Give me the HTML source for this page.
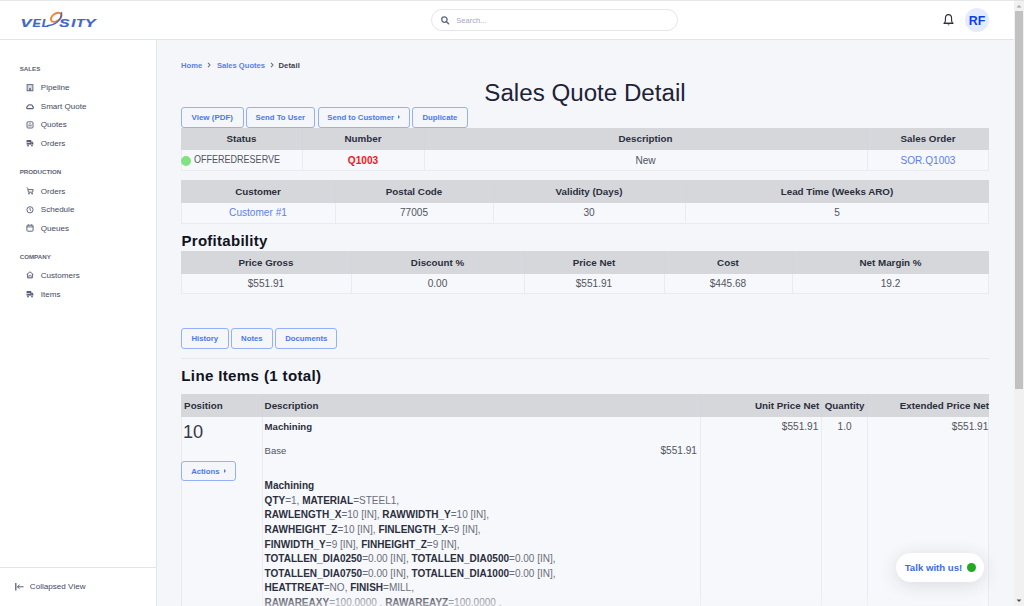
<!DOCTYPE html>
<html><head><meta charset="utf-8"><title>Sales Quote Detail</title>
<style>
html,body{margin:0;padding:0;}
body{width:1024px;height:606px;overflow:hidden;position:relative;background:#f5f6fa;font-family:"Liberation Sans",sans-serif;}
.t{position:absolute;white-space:nowrap;}
.r{position:absolute;}
b{font-weight:700}
</style></head><body>
<div class="r" style="left:0px;top:0px;width:1024px;height:1px;background:#e6e7ea"></div>
<div class="r" style="left:0px;top:1px;width:1024px;height:38px;background:#fff"></div>
<div class="r" style="left:0px;top:39px;width:1024px;height:1px;background:#e3e5ec"></div>
<div class="r" style="left:0px;top:40px;width:156px;height:566px;background:#fff"></div>
<div class="r" style="left:156px;top:40px;width:1px;height:566px;background:#e3e5ec"></div>
<div class="r" style="left:0px;top:567px;width:156px;height:1px;background:#e3e5ec"></div>
<svg class="r" style="left:0px;top:0px" width="110" height="36" viewBox="0 0 110 36"><text x="20.50" y="26.7" font-family="Liberation Sans" font-weight="700" font-style="italic" font-size="10.1" fill="#4366c6" stroke="#4366c6" stroke-width="0.2" textLength="11.00" lengthAdjust="spacingAndGlyphs">V</text><text x="32.50" y="26.7" font-family="Liberation Sans" font-weight="700" font-style="italic" font-size="10.1" fill="#4366c6" stroke="#4366c6" stroke-width="0.2" textLength="8.20" lengthAdjust="spacingAndGlyphs">E</text><text x="41.80" y="26.7" font-family="Liberation Sans" font-weight="700" font-style="italic" font-size="10.1" fill="#4366c6" stroke="#4366c6" stroke-width="0.2" textLength="7.40" lengthAdjust="spacingAndGlyphs">L</text><text x="59.30" y="26.7" font-family="Liberation Sans" font-weight="700" font-style="italic" font-size="10.1" fill="#4366c6" stroke="#4366c6" stroke-width="0.2" textLength="10.20" lengthAdjust="spacingAndGlyphs">S</text><text x="71.20" y="26.7" font-family="Liberation Sans" font-weight="700" font-style="italic" font-size="10.1" fill="#4366c6" stroke="#4366c6" stroke-width="0.2" textLength="4.10" lengthAdjust="spacingAndGlyphs">I</text><text x="76.10" y="26.7" font-family="Liberation Sans" font-weight="700" font-style="italic" font-size="10.1" fill="#4366c6" stroke="#4366c6" stroke-width="0.2" textLength="8.60" lengthAdjust="spacingAndGlyphs">T</text><text x="84.70" y="26.7" font-family="Liberation Sans" font-weight="700" font-style="italic" font-size="10.1" fill="#4366c6" stroke="#4366c6" stroke-width="0.2" textLength="10.90" lengthAdjust="spacingAndGlyphs">Y</text><ellipse cx="56.2" cy="17.3" rx="6.0" ry="3.7" fill="none" stroke="#f2832f" stroke-width="1.9" transform="rotate(-35 56.2 17.3)"/><path d="M47.5 25.6 C 54 25.4, 61.5 21, 61.6 12.8" fill="none" stroke="#4366c6" stroke-width="1.4" stroke-linecap="round"/></svg>
<div class="r" style="left:431px;top:9px;width:247px;height:22px;box-sizing:border-box;border:1px solid #e4e6ee;border-radius:11px;background:#fff"></div>
<svg class="r" style="left:440px;top:15px" width="11" height="11" viewBox="0 0 11 11"><circle cx="4.4" cy="4.6" r="2.7" fill="none" stroke="#5c6684" stroke-width="1.3"/><path d="M6.5 6.7 L8.6 8.8" stroke="#5c6684" stroke-width="1.4" stroke-linecap="round"/></svg>
<div class="t" style="left:456.30px;top:15.90px;font-size:7.5px;line-height:9.00px;font-weight:400;color:#a3a6c4;">Search...</div>
<svg class="r" style="left:942px;top:13px" width="13" height="14" viewBox="0 0 13 14"><path d="M2.2 10.2 L2.9 9.2 C3.3 8.5 3.4 7.9 3.4 6.9 V5.6 C3.4 3.3 4.7 1.6 6.5 1.6 C8.3 1.6 9.6 3.3 9.6 5.6 V6.9 C9.6 7.9 9.7 8.5 10.1 9.2 L10.8 10.2 Z" fill="none" stroke="#272b36" stroke-width="1.1" stroke-linejoin="round"/><path d="M1.6 10.3 H11.4" stroke="#272b36" stroke-width="1.1"/><path d="M5.4 11.6 L6.5 12.6 L7.6 11.6 Z" fill="#272b36"/></svg>
<div class="r" style="left:965px;top:8px;width:24px;height:24px;border-radius:50%;background:#e3ebfd"></div>
<div class="t" style="left:965.00px;top:14.26px;font-size:12.4px;line-height:14.88px;font-weight:700;color:#0b3ff0;width:24.00px;text-align:center;">RF</div>
<div class="t" style="left:19.70px;top:64.83px;font-size:6.2px;line-height:7.44px;font-weight:700;color:#5d6375;">SALES</div>
<div class="t" style="left:40.80px;top:83.27px;font-size:8.06px;line-height:9.67px;font-weight:400;color:#434a62;">Pipeline</div>
<svg class="r" style="left:25.5px;top:84px" width="8" height="8" viewBox="0 0 8 8"><rect x="1.1" y="0.6" width="5.8" height="6.2" fill="#d5d8e0" stroke="#5a6079" stroke-width="0.9"/><rect x="3.2" y="4.2" width="1.6" height="2.6" fill="#5a6079"/></svg>
<div class="t" style="left:40.80px;top:101.87px;font-size:8.06px;line-height:9.67px;font-weight:400;color:#434a62;">Smart Quote</div>
<svg class="r" style="left:25.5px;top:102px" width="8" height="8" viewBox="0 0 8 8"><path d="M1.4 6.6 C0.4 6.6 0.3 4.8 1.5 4.6 C1.7 3.2 3.2 2.4 4.3 3 C5.1 2.4 6.6 3 6.5 4.4 C7.7 4.6 7.6 6.6 6.5 6.6 Z" fill="none" stroke="#5a6079" stroke-width="1.1" stroke-linejoin="round"/></svg>
<div class="t" style="left:40.80px;top:120.47px;font-size:8.06px;line-height:9.67px;font-weight:400;color:#434a62;">Quotes</div>
<svg class="r" style="left:25.5px;top:121px" width="8" height="8" viewBox="0 0 8 8"><rect x="1" y="0.8" width="6" height="6.2" rx="1" fill="none" stroke="#5a6079" stroke-width="0.95"/><path d="M2.2 4.8 H5.8 M3 3.6 L4 2.4 L5 3.6" fill="none" stroke="#5a6079" stroke-width="0.9"/></svg>
<div class="t" style="left:40.80px;top:139.07px;font-size:8.06px;line-height:9.67px;font-weight:400;color:#434a62;">Orders</div>
<svg class="r" style="left:25.5px;top:139px" width="8" height="8" viewBox="0 0 8 8"><rect x="0.6" y="1" width="4.6" height="4.6" fill="#5a6079"/><path d="M5.2 2.4 H6.4 L7.4 4 V5.6 H5.2 Z" fill="#5a6079"/><rect x="0.6" y="3" width="3.6" height="0.7" fill="#fff"/><circle cx="2" cy="6.6" r="0.9" fill="#5a6079"/><circle cx="6" cy="6.6" r="0.9" fill="#5a6079"/></svg>
<div class="t" style="left:19.70px;top:168.33px;font-size:6.2px;line-height:7.44px;font-weight:700;color:#5d6375;">PRODUCTION</div>
<div class="t" style="left:40.80px;top:186.67px;font-size:8.06px;line-height:9.67px;font-weight:400;color:#434a62;">Orders</div>
<svg class="r" style="left:25.5px;top:187px" width="8" height="8" viewBox="0 0 8 8"><path d="M0.6 0.4 L1.8 1.4 L2.4 5.2 H6.6 L7.2 2.6 H2.2" fill="none" stroke="#5a6079" stroke-width="0.95"/><circle cx="3" cy="6.6" r="0.85" fill="#5a6079"/><circle cx="6.1" cy="6.6" r="0.85" fill="#5a6079"/></svg>
<div class="t" style="left:40.80px;top:205.37px;font-size:8.06px;line-height:9.67px;font-weight:400;color:#434a62;">Schedule</div>
<svg class="r" style="left:25.5px;top:206px" width="8" height="8" viewBox="0 0 8 8"><circle cx="4" cy="3.8" r="3.1" fill="none" stroke="#5a6079" stroke-width="0.95"/><path d="M4 2 V3.9 L5.2 4.8" fill="none" stroke="#5a6079" stroke-width="0.9"/></svg>
<div class="t" style="left:40.80px;top:223.97px;font-size:8.06px;line-height:9.67px;font-weight:400;color:#434a62;">Queues</div>
<svg class="r" style="left:25.5px;top:224px" width="8" height="8" viewBox="0 0 8 8"><rect x="0.9" y="1.2" width="6.2" height="6" rx="0.8" fill="none" stroke="#5a6079" stroke-width="0.95"/><path d="M0.9 2.9 H7.1" stroke="#5a6079" stroke-width="0.9"/><path d="M2.4 0.3 V1.6 M5.6 0.3 V1.6" stroke="#5a6079" stroke-width="0.8"/></svg>
<div class="t" style="left:19.70px;top:253.33px;font-size:6.2px;line-height:7.44px;font-weight:700;color:#5d6375;">COMPANY</div>
<div class="t" style="left:40.80px;top:271.17px;font-size:8.06px;line-height:9.67px;font-weight:400;color:#434a62;">Customers</div>
<svg class="r" style="left:25.5px;top:271px" width="8" height="8" viewBox="0 0 8 8"><path d="M0.7 3.6 L4 0.8 L7.3 3.6 M1.6 3 V6.9 H6.4 V3" fill="none" stroke="#5a6079" stroke-width="0.95" stroke-linejoin="round"/><path d="M2.8 6.9 V5 C2.8 4 5.2 4 5.2 5 V6.9" fill="none" stroke="#5a6079" stroke-width="0.8"/></svg>
<div class="t" style="left:40.80px;top:289.77px;font-size:8.06px;line-height:9.67px;font-weight:400;color:#434a62;">Items</div>
<svg class="r" style="left:25.5px;top:290px" width="8" height="8" viewBox="0 0 8 8"><rect x="0.6" y="1" width="4.6" height="4.6" fill="#5a6079"/><path d="M5.2 2.4 H6.4 L7.4 4 V5.6 H5.2 Z" fill="#5a6079"/><rect x="0.6" y="3" width="3.6" height="0.7" fill="#fff"/><circle cx="2" cy="6.6" r="0.9" fill="#5a6079"/><circle cx="6" cy="6.6" r="0.9" fill="#5a6079"/></svg>
<svg class="r" style="left:14px;top:582px" width="11" height="10" viewBox="0 0 11 10"><path d="M1.8 1 V8.6" stroke="#5a6079" stroke-width="1.3"/><path d="M3.4 4.8 H9.6 M5.6 2.8 L3.4 4.8 L5.6 6.8" fill="none" stroke="#5a6079" stroke-width="1"/></svg>
<div class="t" style="left:29.80px;top:581.81px;font-size:8.12px;line-height:9.74px;font-weight:400;color:#434a62;">Collapsed View</div>
<div class="t" style="left:181.10px;top:60.51px;font-size:7.6px;line-height:9.12px;font-weight:700;color:#5a80f0;">Home</div>
<svg class="r" style="left:206px;top:61px" width="6" height="8" viewBox="0 0 6 8"><path d="M2 1.8 L4 4 L2 6.2" fill="none" stroke="#6b7080" stroke-width="1.1"/></svg>
<div class="t" style="left:216.90px;top:60.51px;font-size:7.6px;line-height:9.12px;font-weight:700;color:#5a80f0;">Sales Quotes</div>
<svg class="r" style="left:269px;top:61px" width="6" height="8" viewBox="0 0 6 8"><path d="M2 1.8 L4 4 L2 6.2" fill="none" stroke="#6b7080" stroke-width="1.1"/></svg>
<div class="t" style="left:278.50px;top:60.51px;font-size:7.6px;line-height:9.12px;font-weight:700;color:#3a3e4c;letter-spacing:0.12px;">Detail</div>
<div class="t" style="left:181.00px;top:78.74px;font-size:24.15px;line-height:28.98px;font-weight:400;color:#1e2236;width:808.00px;text-align:center;">Sales Quote Detail</div>
<div class="r" style="left:181px;top:107px;width:62.5px;height:20.5px;box-sizing:border-box;border:1px solid #94b0f6;border-radius:3px;background:#f5f6fa"></div>
<div class="t" style="left:181.00px;top:112.66px;font-size:7.97px;line-height:9.56px;font-weight:700;color:#4a78f0;width:62.50px;text-align:center;">View (PDF)</div>
<div class="r" style="left:245.6px;top:107px;width:69.4px;height:20.5px;box-sizing:border-box;border:1px solid #94b0f6;border-radius:3px;background:#f5f6fa"></div>
<div class="t" style="left:245.60px;top:112.86px;font-size:7.75px;line-height:9.30px;font-weight:700;color:#4a78f0;width:69.40px;text-align:center;">Send To User</div>
<div class="r" style="left:317.5px;top:107px;width:92.19999999999999px;height:20.5px;box-sizing:border-box;border:1px solid #94b0f6;border-radius:3px;background:#f5f6fa"></div>
<div class="t" style="left:317.50px;top:112.86px;font-size:7.75px;line-height:9.30px;font-weight:700;color:#4a78f0;width:92.20px;text-align:center;">Send to Customer<span style="display:inline-block;width:0;height:0;border-left:2.6px solid currentColor;border-top:2.4px solid transparent;border-bottom:2.4px solid transparent;margin-left:4px;vertical-align:1px"></span></div>
<div class="r" style="left:412px;top:107px;width:55.80000000000001px;height:20.5px;box-sizing:border-box;border:1px solid #94b0f6;border-radius:3px;background:#f5f6fa"></div>
<div class="t" style="left:412.00px;top:112.86px;font-size:7.75px;line-height:9.30px;font-weight:700;color:#4a78f0;width:55.80px;text-align:center;">Duplicate</div>
<div class="r" style="left:181px;top:128px;width:808px;height:22px;background:#d6d7db"></div>
<div class="r" style="left:181px;top:150px;width:808px;height:21px;box-sizing:border-box;background:#f7f8fb;border:1px solid #eaebf0;border-top:0"></div>
<div class="r" style="left:302px;top:128px;width:1px;height:22px;background:#d3d5dc"></div>
<div class="r" style="left:302px;top:150px;width:1px;height:21px;background:#eaebf0"></div>
<div class="r" style="left:424px;top:128px;width:1px;height:22px;background:#d3d5dc"></div>
<div class="r" style="left:424px;top:150px;width:1px;height:21px;background:#eaebf0"></div>
<div class="r" style="left:867px;top:128px;width:1px;height:22px;background:#d3d5dc"></div>
<div class="r" style="left:867px;top:150px;width:1px;height:21px;background:#eaebf0"></div>
<div class="t" style="left:181.00px;top:133.12px;font-size:9.8px;line-height:11.76px;font-weight:700;color:#2b2f3d;width:121.00px;text-align:center;">Status</div>
<div class="t" style="left:302.00px;top:133.12px;font-size:9.8px;line-height:11.76px;font-weight:700;color:#2b2f3d;width:122.00px;text-align:center;">Number</div>
<div class="t" style="left:424.00px;top:133.12px;font-size:9.8px;line-height:11.76px;font-weight:700;color:#2b2f3d;width:443.00px;text-align:center;">Description</div>
<div class="t" style="left:867.00px;top:133.12px;font-size:9.8px;line-height:11.76px;font-weight:700;color:#2b2f3d;width:122.00px;text-align:center;">Sales Order</div>
<div class="t" style="left:302.00px;top:154.74px;font-size:10.1px;line-height:12.12px;font-weight:700;color:#f5141a;width:122.00px;text-align:center;">Q1003</div>
<div class="t" style="left:424.00px;top:154.74px;font-size:10.1px;line-height:12.12px;font-weight:400;color:#51555f;width:443.00px;text-align:center;">New</div>
<div class="t" style="left:867.00px;top:154.74px;font-size:10.1px;line-height:12.12px;font-weight:400;color:#5a80f0;width:122.00px;text-align:center;">SOR.Q1003</div>
<div class="r" style="left:181px;top:155.5px;width:10px;height:10px;border-radius:50%;background:#82e282"></div>
<div class="t" style="left:194.10px;top:153.95px;font-size:10.2px;line-height:12.24px;font-weight:400;color:#51555f;transform:scaleX(0.885);transform-origin:0 0;">OFFEREDRESERVE</div>
<div class="r" style="left:181px;top:180px;width:808px;height:23px;background:#d6d7db"></div>
<div class="r" style="left:181px;top:203px;width:808px;height:21px;box-sizing:border-box;background:#f7f8fb;border:1px solid #eaebf0;border-top:0"></div>
<div class="r" style="left:335px;top:180px;width:1px;height:23px;background:#d3d5dc"></div>
<div class="r" style="left:335px;top:203px;width:1px;height:21px;background:#eaebf0"></div>
<div class="r" style="left:493px;top:180px;width:1px;height:23px;background:#d3d5dc"></div>
<div class="r" style="left:493px;top:203px;width:1px;height:21px;background:#eaebf0"></div>
<div class="r" style="left:685px;top:180px;width:1px;height:23px;background:#d3d5dc"></div>
<div class="r" style="left:685px;top:203px;width:1px;height:21px;background:#eaebf0"></div>
<div class="t" style="left:181.00px;top:185.92px;font-size:9.8px;line-height:11.76px;font-weight:700;color:#2b2f3d;width:154.00px;text-align:center;">Customer</div>
<div class="t" style="left:335.00px;top:185.92px;font-size:9.8px;line-height:11.76px;font-weight:700;color:#2b2f3d;width:158.00px;text-align:center;">Postal Code</div>
<div class="t" style="left:493.00px;top:185.92px;font-size:9.8px;line-height:11.76px;font-weight:700;color:#2b2f3d;width:192.00px;text-align:center;">Validity (Days)</div>
<div class="t" style="left:685.00px;top:185.92px;font-size:9.8px;line-height:11.76px;font-weight:700;color:#2b2f3d;width:304.00px;text-align:center;">Lead Time (Weeks ARO)</div>
<div class="t" style="left:181.00px;top:207.14px;font-size:10.1px;line-height:12.12px;font-weight:400;color:#5a80f0;width:154.00px;text-align:center;">Customer #1</div>
<div class="t" style="left:335.00px;top:207.14px;font-size:10.1px;line-height:12.12px;font-weight:400;color:#51555f;width:158.00px;text-align:center;">77005</div>
<div class="t" style="left:493.00px;top:207.14px;font-size:10.1px;line-height:12.12px;font-weight:400;color:#51555f;width:192.00px;text-align:center;">30</div>
<div class="t" style="left:685.00px;top:207.14px;font-size:10.1px;line-height:12.12px;font-weight:400;color:#51555f;width:304.00px;text-align:center;">5</div>
<div class="t" style="left:181.50px;top:232.20px;font-size:15.0px;line-height:18.00px;font-weight:700;color:#101322;letter-spacing:0.28px;">Profitability</div>
<div class="r" style="left:181px;top:251px;width:808px;height:23px;background:#d6d7db"></div>
<div class="r" style="left:181px;top:274px;width:808px;height:20px;box-sizing:border-box;background:#f7f8fb;border:1px solid #eaebf0;border-top:0"></div>
<div class="r" style="left:351px;top:251px;width:1px;height:23px;background:#d3d5dc"></div>
<div class="r" style="left:351px;top:274px;width:1px;height:20px;background:#eaebf0"></div>
<div class="r" style="left:524px;top:251px;width:1px;height:23px;background:#d3d5dc"></div>
<div class="r" style="left:524px;top:274px;width:1px;height:20px;background:#eaebf0"></div>
<div class="r" style="left:664px;top:251px;width:1px;height:23px;background:#d3d5dc"></div>
<div class="r" style="left:664px;top:274px;width:1px;height:20px;background:#eaebf0"></div>
<div class="r" style="left:792px;top:251px;width:1px;height:23px;background:#d3d5dc"></div>
<div class="r" style="left:792px;top:274px;width:1px;height:20px;background:#eaebf0"></div>
<div class="t" style="left:181.00px;top:256.72px;font-size:9.8px;line-height:11.76px;font-weight:700;color:#2b2f3d;width:170.00px;text-align:center;">Price Gross</div>
<div class="t" style="left:351.00px;top:256.72px;font-size:9.8px;line-height:11.76px;font-weight:700;color:#2b2f3d;width:173.00px;text-align:center;">Discount %</div>
<div class="t" style="left:524.00px;top:256.72px;font-size:9.8px;line-height:11.76px;font-weight:700;color:#2b2f3d;width:140.00px;text-align:center;">Price Net</div>
<div class="t" style="left:664.00px;top:256.72px;font-size:9.8px;line-height:11.76px;font-weight:700;color:#2b2f3d;width:128.00px;text-align:center;">Cost</div>
<div class="t" style="left:792.00px;top:256.72px;font-size:9.8px;line-height:11.76px;font-weight:700;color:#2b2f3d;width:197.00px;text-align:center;">Net Margin %</div>
<div class="t" style="left:181.00px;top:278.04px;font-size:10.1px;line-height:12.12px;font-weight:400;color:#51555f;width:170.00px;text-align:center;">$551.91</div>
<div class="t" style="left:351.00px;top:278.04px;font-size:10.1px;line-height:12.12px;font-weight:400;color:#51555f;width:173.00px;text-align:center;">0.00</div>
<div class="t" style="left:524.00px;top:278.04px;font-size:10.1px;line-height:12.12px;font-weight:400;color:#51555f;width:140.00px;text-align:center;">$551.91</div>
<div class="t" style="left:664.00px;top:278.04px;font-size:10.1px;line-height:12.12px;font-weight:400;color:#51555f;width:128.00px;text-align:center;">$445.68</div>
<div class="t" style="left:792.00px;top:278.04px;font-size:10.1px;line-height:12.12px;font-weight:400;color:#51555f;width:197.00px;text-align:center;">19.2</div>
<div class="r" style="left:181px;top:328.3px;width:47.5px;height:20.30000000000001px;box-sizing:border-box;border:1px solid #94b0f6;border-radius:3px;background:#f5f6fa"></div>
<div class="t" style="left:181.00px;top:333.86px;font-size:7.75px;line-height:9.30px;font-weight:700;color:#4a78f0;width:47.50px;text-align:center;">History</div>
<div class="r" style="left:231.1px;top:328.3px;width:41.50000000000003px;height:20.30000000000001px;box-sizing:border-box;border:1px solid #94b0f6;border-radius:3px;background:#f5f6fa"></div>
<div class="t" style="left:231.10px;top:333.86px;font-size:7.75px;line-height:9.30px;font-weight:700;color:#4a78f0;width:41.50px;text-align:center;">Notes</div>
<div class="r" style="left:275.1px;top:328.3px;width:62.299999999999955px;height:20.30000000000001px;box-sizing:border-box;border:1px solid #94b0f6;border-radius:3px;background:#f5f6fa"></div>
<div class="t" style="left:275.10px;top:333.86px;font-size:7.75px;line-height:9.30px;font-weight:700;color:#4a78f0;width:62.30px;text-align:center;">Documents</div>
<div class="r" style="left:181px;top:358px;width:808px;height:1px;background:#e7e8ed"></div>
<div class="t" style="left:181.30px;top:366.71px;font-size:15.1px;line-height:18.12px;font-weight:700;color:#101322;letter-spacing:0.34px;">Line Items (1 total)</div>
<div class="r" style="left:181px;top:394px;width:808px;height:23px;background:#d6d7db"></div>
<div class="r" style="left:181px;top:417px;width:808px;height:190px;background:#f7f8fb"></div>
<div class="r" style="left:181px;top:417px;width:1px;height:190px;background:#eaebf0"></div>
<div class="r" style="left:988px;top:417px;width:1px;height:190px;background:#eaebf0"></div>
<div class="r" style="left:262px;top:394px;width:1px;height:23px;background:#d3d5dc"></div>
<div class="r" style="left:262px;top:417px;width:1px;height:190px;background:#eaebf0"></div>
<div class="r" style="left:700px;top:394px;width:1px;height:23px;background:#d3d5dc"></div>
<div class="r" style="left:700px;top:417px;width:1px;height:190px;background:#eaebf0"></div>
<div class="r" style="left:821px;top:394px;width:1px;height:23px;background:#d3d5dc"></div>
<div class="r" style="left:821px;top:417px;width:1px;height:190px;background:#eaebf0"></div>
<div class="r" style="left:867px;top:394px;width:1px;height:23px;background:#d3d5dc"></div>
<div class="r" style="left:867px;top:417px;width:1px;height:190px;background:#eaebf0"></div>
<div class="t" style="left:184.10px;top:399.82px;font-size:9.8px;line-height:11.76px;font-weight:700;color:#2b2f3d;">Position</div>
<div class="t" style="left:264.60px;top:399.82px;font-size:9.8px;line-height:11.76px;font-weight:700;color:#2b2f3d;">Description</div>
<div class="t" style="left:700.20px;top:399.82px;font-size:9.8px;line-height:11.76px;font-weight:700;color:#2b2f3d;width:119.00px;text-align:right;">Unit Price Net</div>
<div class="t" style="left:821.60px;top:399.82px;font-size:9.8px;line-height:11.76px;font-weight:700;color:#2b2f3d;width:46.00px;text-align:center;">Quantity</div>
<div class="t" style="left:860.00px;top:399.82px;font-size:9.8px;line-height:11.76px;font-weight:700;color:#2b2f3d;width:129.00px;text-align:right;">Extended Price Net</div>
<div class="t" style="left:183.00px;top:422.37px;font-size:18.2px;line-height:21.84px;font-weight:400;color:#363a48;">10</div>
<div class="r" style="left:181.1px;top:461.4px;width:54.5px;height:19.900000000000034px;box-sizing:border-box;border:1px solid #94b0f6;border-radius:3px;background:#f5f6fa"></div>
<div class="t" style="left:181.10px;top:466.96px;font-size:7.75px;line-height:9.30px;font-weight:700;color:#4a78f0;width:54.50px;text-align:center;">Actions<span style="display:inline-block;width:0;height:0;border-left:2.6px solid currentColor;border-top:2.4px solid transparent;border-bottom:2.4px solid transparent;margin-left:4px;vertical-align:1px"></span></div>
<div class="t" style="left:264.60px;top:420.71px;font-size:9.6px;line-height:11.52px;font-weight:700;color:#2b2f3d;">Machining</div>
<div class="t" style="left:264.60px;top:445.41px;font-size:9.5px;line-height:11.40px;font-weight:400;color:#51555f;">Base</div>
<div class="t" style="left:600.00px;top:444.84px;font-size:10.1px;line-height:12.12px;font-weight:400;color:#51555f;width:97.00px;text-align:right;">$551.91</div>
<div class="t" style="left:700.00px;top:420.64px;font-size:10.1px;line-height:12.12px;font-weight:400;color:#51555f;width:118.30px;text-align:right;">$551.91</div>
<div class="t" style="left:821.60px;top:420.64px;font-size:10.1px;line-height:12.12px;font-weight:400;color:#51555f;width:46.00px;text-align:center;">1.0</div>
<div class="t" style="left:860.00px;top:420.64px;font-size:10.1px;line-height:12.12px;font-weight:400;color:#51555f;width:128.30px;text-align:right;">$551.91</div>
<div class="t" style="left:264.60px;top:480.02px;font-size:10.02px;line-height:12.02px;font-weight:400;color:#6a6e79;white-space:nowrap;"><b style="color:#2b2f3d">Machining</b></div>
<div class="t" style="left:264.60px;top:494.65px;font-size:10.02px;line-height:12.02px;font-weight:400;color:#6a6e79;white-space:nowrap;"><b style="color:#2b2f3d">QTY</b><span style="color:#6a6e79">=1</span>, <b style="color:#2b2f3d">MATERIAL</b><span style="color:#6a6e79">=STEEL1</span>,</div>
<div class="t" style="left:264.60px;top:509.28px;font-size:10.02px;line-height:12.02px;font-weight:400;color:#6a6e79;white-space:nowrap;"><b style="color:#2b2f3d">RAWLENGTH_X</b><span style="color:#6a6e79">=10 [IN]</span>, <b style="color:#2b2f3d">RAWWIDTH_Y</b><span style="color:#6a6e79">=10 [IN]</span>,</div>
<div class="t" style="left:264.60px;top:523.91px;font-size:10.02px;line-height:12.02px;font-weight:400;color:#6a6e79;white-space:nowrap;"><b style="color:#2b2f3d">RAWHEIGHT_Z</b><span style="color:#6a6e79">=10 [IN]</span>, <b style="color:#2b2f3d">FINLENGTH_X</b><span style="color:#6a6e79">=9 [IN]</span>,</div>
<div class="t" style="left:264.60px;top:538.54px;font-size:10.02px;line-height:12.02px;font-weight:400;color:#6a6e79;white-space:nowrap;"><b style="color:#2b2f3d">FINWIDTH_Y</b><span style="color:#6a6e79">=9 [IN]</span>, <b style="color:#2b2f3d">FINHEIGHT_Z</b><span style="color:#6a6e79">=9 [IN]</span>,</div>
<div class="t" style="left:264.60px;top:553.17px;font-size:10.02px;line-height:12.02px;font-weight:400;color:#6a6e79;white-space:nowrap;"><b style="color:#2b2f3d">TOTALLEN_DIA0250</b><span style="color:#6a6e79">=0.00 [IN]</span>, <b style="color:#2b2f3d">TOTALLEN_DIA0500</b><span style="color:#6a6e79">=0.00 [IN]</span>,</div>
<div class="t" style="left:264.60px;top:567.80px;font-size:10.02px;line-height:12.02px;font-weight:400;color:#6a6e79;white-space:nowrap;"><b style="color:#2b2f3d">TOTALLEN_DIA0750</b><span style="color:#6a6e79">=0.00 [IN]</span>, <b style="color:#2b2f3d">TOTALLEN_DIA1000</b><span style="color:#6a6e79">=0.00 [IN]</span>,</div>
<div class="t" style="left:264.60px;top:582.43px;font-size:10.02px;line-height:12.02px;font-weight:400;color:#6a6e79;white-space:nowrap;"><b style="color:#2b2f3d">HEATTREAT</b><span style="color:#6a6e79">=NO</span>, <b style="color:#2b2f3d">FINISH</b><span style="color:#6a6e79">=MILL</span>,</div>
<div class="t" style="left:264.60px;top:597.06px;font-size:10.02px;line-height:12.02px;font-weight:400;color:#6a6e79;white-space:nowrap;"><b style="color:#2b2f3d">RAWAREAXY</b><span style="color:#6a6e79">=100.0000 </span>, <b style="color:#2b2f3d">RAWAREAYZ</b><span style="color:#6a6e79">=100.0000 </span>,</div>
<div class="r" style="left:182px;top:592px;width:800px;height:14px;background:linear-gradient(rgba(245,246,250,0),rgba(245,246,250,0.55))"></div>
<div class="r" style="left:896px;top:553px;width:88px;height:29px;border-radius:15px;background:#fff;box-shadow:0 3px 18px rgba(30,40,70,0.14)"></div>
<div class="t" style="left:904.70px;top:562.27px;font-size:9.65px;line-height:11.58px;font-weight:700;color:#3d6ce8;">Talk with us!</div>
<div class="r" style="left:967px;top:563px;width:9px;height:9px;border-radius:50%;background:#22a822"></div>
<div class="r" style="left:1014px;top:0px;width:10px;height:606px;background:#f1f1f1"></div>
<div class="r" style="left:1014.6px;top:10.8px;width:8.3px;height:378px;background:#c1c1c1"></div>
<div class="r" style="left:1014px;top:0px;width:10px;height:1px;background:#e2e3e6"></div>
<svg class="r" style="left:1014px;top:0.5px" width="10" height="10" viewBox="0 0 10 10"><path d="M2.6 6.6 L5 4 L7.4 6.6 Z" fill="#a3a3a3"/></svg>
<svg class="r" style="left:1014px;top:596px" width="10" height="10" viewBox="0 0 10 10"><path d="M2.6 3.4 L5 6 L7.4 3.4 Z" fill="#505050"/></svg>
</body></html>
